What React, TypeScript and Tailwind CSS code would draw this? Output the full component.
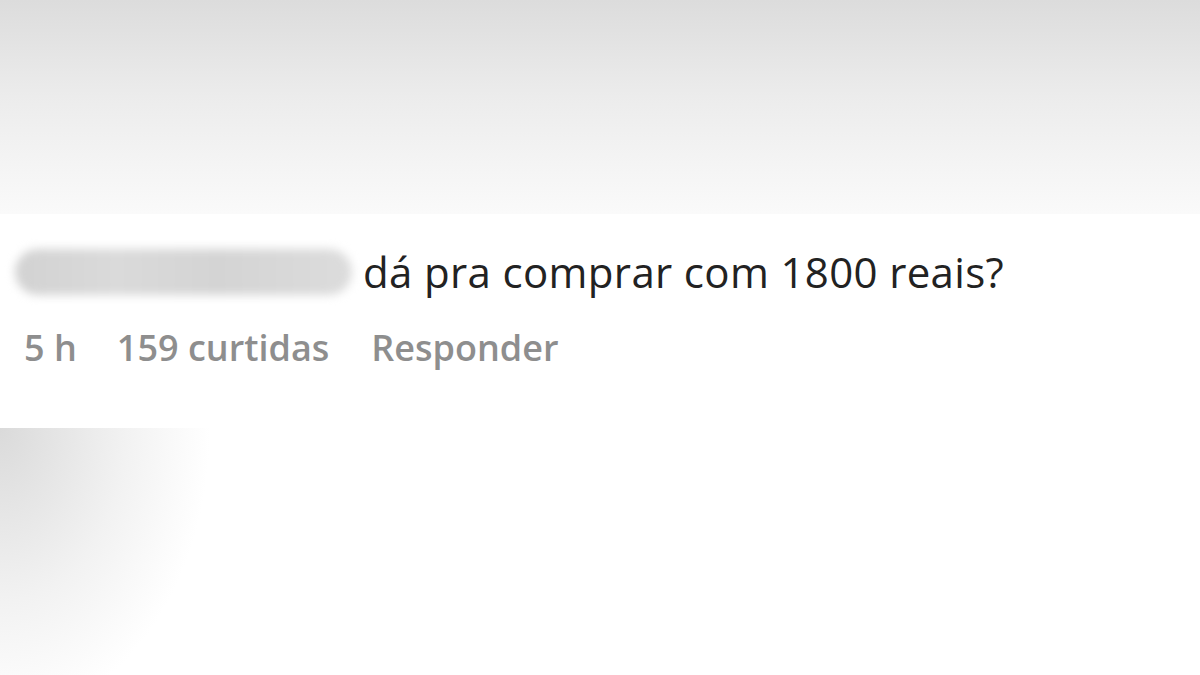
export default function App() {
  return (
    <div className="flex h-[675px] w-[1200px] flex-col overflow-hidden bg-white font-['Open_Sans',sans-serif]">
      {/* faded top of the previous comment */}
      <div className="h-[214px] shrink-0 bg-[linear-gradient(to_bottom,#dcdcdc,#ececec_45%,#fafafa)]" />

      {/* the comment itself */}
      <div className="flex h-[214px] shrink-0 flex-col bg-white">
        <div className="mt-[35px] flex items-center">
          <div className="ml-[15px] h-[46px] w-[337px] shrink-0 rounded-full bg-[linear-gradient(to_right,#d2d2d2,#dadada_30%,#d4d4d4_60%,#dcdcdc)] blur-[5px]" />
          <span className="ml-[11px] text-[42px] leading-none tracking-[0.35px] text-[#222222]">
            dá pra comprar com 1800 reais?
          </span>
        </div>
        <div className="mt-[35px] flex items-center pl-[24px] text-[36px] font-semibold leading-none text-[#8e8e8e]">
          <span>5 h</span>
          <span className="ml-[40px]">159 curtidas</span>
          <span className="ml-[42px]">Responder</span>
        </div>
      </div>

      {/* faded bottom */}
      <div className="flex-1 bg-[radial-gradient(ellipse_210px_290px_at_0%_0%,#dadada,#f2f2f2_60%,#ffffff_100%)]" />
    </div>
  )
}
